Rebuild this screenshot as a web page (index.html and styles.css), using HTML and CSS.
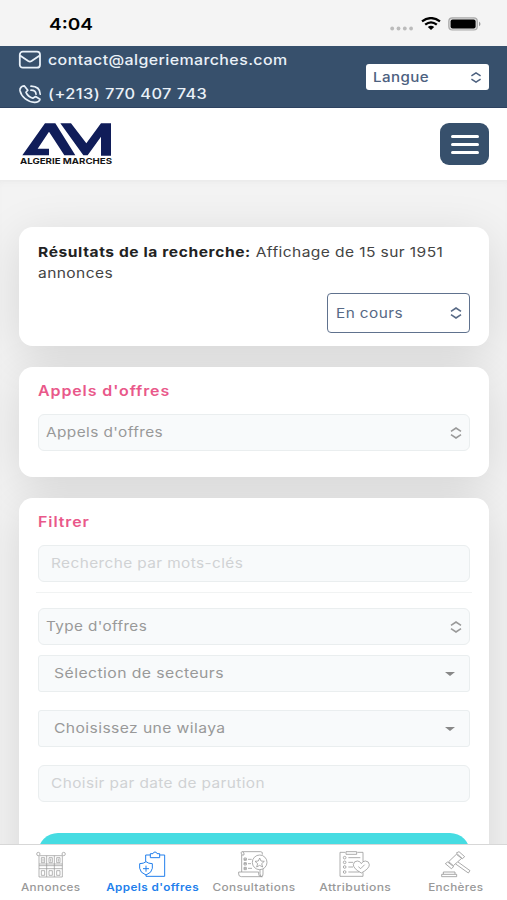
FILE: index.html
```html
<!DOCTYPE html>
<html lang="fr">
<head>
<meta charset="utf-8">
<title>Algerie Marches</title>
<link rel="stylesheet" href="styles.css">
</head>
<body>
<svg class="defs" width="0" height="0">
  <symbol id="updown" viewBox="0 0 12 12"><path d="M1 4.3 6 1l5 3.3M1 7.7 6 11l5-3.3" fill="none" stroke="currentColor" stroke-width="1.6"/></symbol>
</svg>
<div class="screen">
  <div class="status">
    <span class="t time">4:04</span>
    <div class="signals">
      <svg width="24" height="5" viewBox="0 0 24 5" fill="#bbb"><circle cx="2.2" cy="2.5" r="1.9"/><circle cx="8.5" cy="2.5" r="1.9"/><circle cx="14.8" cy="2.5" r="1.9"/><circle cx="21.1" cy="2.5" r="1.9"/></svg>
      <svg class="wifi" width="20" height="13" viewBox="0 0 20 13"><g fill="none" stroke="#000" stroke-width="2.3"><path d="M1 4.4Q10-2.2 19 4.4"/><path d="M4.2 7.7Q10 3 15.8 7.7"/></g><path d="M6.8 10Q10 7.4 13.2 10L10 13z"/></svg>
      <svg width="33" height="14" viewBox="0 0 33 14"><rect x=".8" y=".8" width="28.5" height="12.2" rx="3.5" fill="#ddd" stroke="#aaa" stroke-width="1.2"/><rect x="2.6" y="2.4" width="25" height="9" rx="2"/><path d="M31 4.5q3 2.4 0 4.8z" fill="#999"/></svg>
    </div>
  </div>

  <div class="topbar">
    <div class="contacts">
      <div class="contact">
        <svg width="24" height="20" viewBox="0 0 24 20" fill="none" stroke="#e9f1f9" stroke-width="1.8"><rect x="1.8" y="1.7" width="20.2" height="16" rx="3"/><path d="M2 5.500l8.200 5.600q1.700 1.100 3.400 0L21.800 5.500"/></svg>
        <span class="t mail">contact@algeriemarches.com</span>
      </div>
      <div class="contact">
        <svg width="24" height="20" viewBox="0 0 24 20" fill="none" stroke="#e9f1f9" stroke-width="1.7" stroke-linejoin="round" stroke-linecap="round"><path d="M6.200 1.800C3.500 2 1.600 4 2 6.700 3.200 12.800 9.500 18 16.500 18.400 19.500 18.500 21.800 17 22 15.200L17.600 12.500 14.800 14.200C12.200 13.400 9 10.600 8 8.300L9.800 6.200z"/><path d="M13 6.200q4.800 0 5 4M13 2.200q9 .2 9.200 8"/></svg>
        <span class="t phone">(+213) 770 407 743</span>
      </div>
    </div>
    <div class="select lang"><span class="t">Langue</span><svg class="ud" width="12" height="11"><use href="#updown"/></svg></div>
  </div>

  <header class="header">
    <div class="logo">
      <svg width="90" height="33" viewBox="65 54 270 99" fill="#101d59"><path d="M66 151 134 55h31l60 96h-33L146 80l-34 51h34v20z"/><path d="M180 55h32l46 60 44-60h30v97h-30V95l-40 56h-13z"/></svg>
      <span class="t logo-name">ALGERIE MARCHES</span>
    </div>
    <div class="menu"><i></i><i></i><i></i></div>
  </header>

  <main class="content">
    <section class="card results">
      <p><span class="t line"><b>Résultats de la recherche:</b> <span class="count">Affichage de 15 sur 1951</span></span><br><span class="t line">annonces</span></p>
      <div class="select state"><span class="t">En cours</span><svg class="ud" width="12" height="12"><use href="#updown"/></svg></div>
    </section>

    <section class="card offers">
      <h2 class="t">Appels d'offres</h2>
      <div class="select field"><span class="t">Appels d'offres</span><svg class="ud" width="12" height="12"><use href="#updown"/></svg></div>
    </section>

    <section class="card filter">
      <h2 class="t">Filtrer</h2>
      <div class="field input"><span class="t">Recherche par mots-clés</span></div>
      <hr>
      <div class="select field"><span class="t type">Type d'offres</span><svg class="ud" width="12" height="12"><use href="#updown"/></svg></div>
      <div class="field drop"><span class="t">Sélection de secteurs</span><i class="caret"></i></div>
      <div class="field drop wilaya"><span class="t">Choisissez une wilaya</span><i class="caret"></i></div>
      <div class="field input date"><span class="t">Choisir par date de parution</span></div>
      <div class="submit"></div>
    </section>
  </main>

  <nav class="tabs">
    <div class="tab">
      <svg width="30" height="27" viewBox="110 78 90 81" fill="none" stroke="currentColor" stroke-width="2.2"><circle cx="117" cy="87" r="5"/><circle cx="193" cy="87" r="5"/><path d="M121 92h68M119 92v64h70V92M119 117h70M119 122h70M119 131h70M142 92v64M165 92v64M126 98h10v15h-10zM149 98h10v15h-10zM172 98h10v15h-10zM131 101v9M154 101v9M177 101v9"/><path d="M126 137h10v14h-10zM149 137h10v14h-10zM172 137h10v14h-10z"/></svg>
      <span class="t">Annonces</span>
    </div>
    <div class="tab active">
      <svg width="28" height="27" viewBox="416 78 84 81" fill="none" stroke="currentColor" stroke-width="3"><path d="M453 90h-14v20M481 90h15v64h-56v-6M453 98v-12h8q1-5 6-5t6 5h8v12zM421 116q12 0 19-6 7 6 19 6v14q-1 13-19 20-18-7-19-20zM440 122v18M431 131h18"/></svg>
      <span class="t">Appels d'offres</span>
    </div>
    <div class="tab consult">
      <svg width="30" height="27" viewBox="206 78 90 81" fill="none" stroke="currentColor" stroke-width="2.400"><path d="M217 141V89q-5-9 2-9h55q7 0 5 9M219 80q7 2 5 10h-7M272 134v12q0 9 7 9h-63q-8 0-8-8v-6h60v6q0 8 8 8 5 0 5-8v-16"/><circle cx="271" cy="112" r="22"/><path d="m271 99 4 9 10 1-8 7 3 10-9-5-9 5 3-10-8-7 10-1zM224 103h7M236 103h11M224 116h7M236 116h9M224 130h7M236 130h12"/><path d="M224 99h7v7h-7zM224 113h7v7h-7zM224 127h7v7h-7z"/></svg>
      <span class="t">Consultations</span>
    </div>
    <div class="tab attrib">
      <svg width="31" height="27" viewBox="6 78 93 81" fill="none" stroke="currentColor" stroke-width="2.400"><path d="M25 82H9v72h69v-12M61 82h17v28M27 80h32v8H27zM34 98h36M34 112h14M34 126h14M34 141h33"/><circle cx="23" cy="98" r="4"/><circle cx="23" cy="112" r="4"/><circle cx="23" cy="126" r="4"/><circle cx="23" cy="141" r="4"/><path d="M73 144Q49 131 49 119q1-11 12-11 8 0 12 8 4-8 12-8 11 0 12 11 0 12-24 25zM64 125l7 6 12-12"/></svg>
      <span class="t">Attributions</span>
    </div>
    <div class="tab">
      <svg width="30" height="27" viewBox="313 78 90 81" fill="none" stroke="currentColor" stroke-width="2.500" stroke-linejoin="round"><path d="m359 84 8-4 17 15-7 6zM326 116l7-5 18 14-7 6zM359 88l-23 22 14 12 25-22zM364 111l36 26-5 7-38-27M320 147v-6h35v6M315 155v-7h45v7z"/></svg>
      <span class="t">Enchères</span>
    </div>
  </nav>
</div>
</body>
</html>
```

FILE: styles.css
```css
* { box-sizing: border-box; }
body { margin: 0; font-family: Inter, "Liberation Sans", sans-serif; font-size: 13.5px; background: #f3f3f3; }
.defs { position: absolute; }
svg { display: block; flex: none; }
.screen { width: 507px; height: 900px; overflow: hidden; display: flex; flex-direction: column; }

/* Wide letterforms used for every label */
.t { --wide: 1.14; display: inline-block; white-space: nowrap; transform: scaleX(var(--wide)); transform-origin: left center; letter-spacing: .35px; }

.status { height: 46px; flex: none; display: flex; justify-content: space-between; padding: 0 26px 0 49px; background: #f4f4f4; }
.time { --wide: 1.19; font-size: 16px; font-weight: 600; line-height: 48px; letter-spacing: 0; }
.signals { display: flex; padding-top: 17px; }
.signals svg:first-child { margin: 9px 7px 0 0; }
.wifi { margin-right: 7px; }

.topbar { height: 62px; flex: none; display: flex; justify-content: space-between; padding: 1px 18px 0; background: #37506c; border-bottom: 1px solid #2d4260; color: #eaf1f8; }
.contact { display: flex; gap: 6px; height: 34px; line-height: 25px; }
.contact svg { margin-top: 3px; }
.mail, .phone { font-weight: 500; font-size: 14px; }
.phone { --wide: 1.17; }
.select { display: flex; align-items: center; justify-content: space-between; }
.lang { width: 123px; height: 26px; margin-top: 17px; padding: 0 7px; background: #fff; border-radius: 3px; color: #4d617f; }
.lang .t { --wide: 1.12; font-weight: 500; }
.ud { color: inherit; }

.header { height: 72px; flex: none; display: flex; justify-content: space-between; padding: 15px 18px 0 20px; background: #fff; }
.logo svg { margin-left: 2px; }
.logo-name { --wide: 1.29; display: block; font-size: 7.5px; font-weight: 700; line-height: 12px; letter-spacing: 0; color: #151515; }
.menu { width: 49px; height: 42px; border-radius: 9px; background: #37506c; display: flex; flex-direction: column; align-items: center; justify-content: center; gap: 5px; }
.menu i { width: 28px; height: 3px; border-radius: 2px; background: #fff; }

.content { position: relative; z-index: 0; flex: 1; min-height: 0; overflow: hidden; padding: 47px 18px 0 19px; background: #f3f3f3; box-shadow: inset 0 5px 10px -7px #ddd; }
.card { position: relative; background: #fff; border-radius: 14px; margin-bottom: 21px; padding: 0 19px; }
/* Shadows sit below all cards so that they never tint a neighbour */
.card::before { content: ""; position: absolute; z-index: -1; inset: 0; border-radius: 14px; box-shadow: 0 10px 48px rgba(0, 0, 0, .12); }
.results { height: 119px; padding-top: 15px; }
.results p { margin: 0; line-height: 21px; color: #444; }
.results b { color: #222; font-weight: 700; letter-spacing: .52px; }
.line { --wide: 1.153; }
.state { width: 143px; height: 40px; margin: 9px 0 0 auto; padding: 0 7px 0 8px; border: 1.5px solid #60728e; border-radius: 4px; color: #576985; }
.offers { height: 110px; padding-top: 13px; }
.filter { height: 420px; padding-top: 13px; }
h2 { margin: 0; height: 34px; line-height: 22px; font-size: 14px; font-weight: 600; color: #e9588a; }
h2.t { display: block; width: max-content; letter-spacing: .8px; }
.field { height: 37px; padding: 0 7px; border: 1px solid #eaeeef; border-radius: 6px; background: #f8fafb; color: #999; display: flex; align-items: center; justify-content: space-between; }
.field .t { margin-top: -1px; }
.type { --wide: 1.13; }
.input { padding-left: 12px; color: #d0d2d4; }
hr { height: 1px; margin: 10px -2px 15px; border: 0; background: #f1f3f3; }
.drop { margin-top: 10px; border-radius: 3px; padding: 0 14px 0 15px; }
.drop .t { --wide: 1.17; }
.wilaya, .date { margin-top: 18px; }
.wilaya .t { --wide: 1.16; }
.caret { border: 5px solid transparent; border-top: 4px solid #888; border-bottom: 0; }
.submit { margin-top: 31px; height: 40px; border-radius: 20px; background: #46dce2; }

.tabs { position: relative; height: 56px; flex: none; display: grid; grid-template-columns: repeat(5, 1fr); background: #fff; border-top: 1px solid #d7d7d7; }
.tab { display: flex; flex-direction: column; align-items: center; padding-top: 6px; color: #999; }
.tab .t { --wide: 1.115; font-size: 10.5px; font-weight: 500; line-height: 20px; transform-origin: center; }
.tab.consult .t { --wide: 1.125; }
.tab.attrib .t { --wide: 1.155; }
.tab.active { color: #227fec; }
.tab.active .t { font-weight: 600; }
```
